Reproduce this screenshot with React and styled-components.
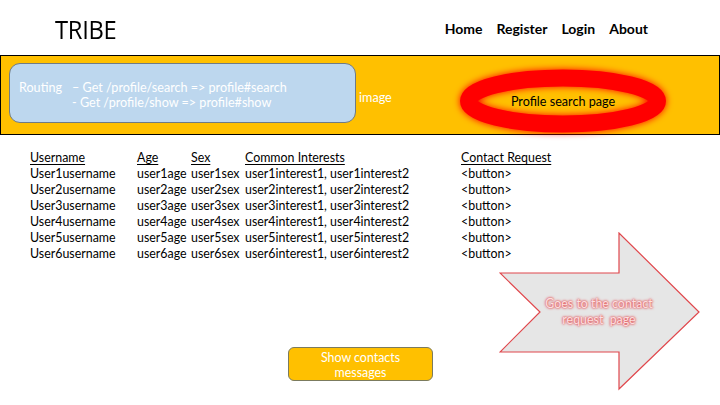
import styled, { createGlobalStyle } from "styled-components";

const GlobalStyle = createGlobalStyle`
  html, body {
    margin: 0;
    padding: 0;
    background: #ffffff;
  }
  body {
    font-family: Lato, "Open Sans", "Liberation Sans", sans-serif;
    color: #000;
  }
`;

const users = [1, 2, 3, 4, 5, 6];

const App = () => {
  return (
    <>
      <GlobalStyle />
      <Slide>
        <Header>
          <Logo>TRIBE</Logo>
          <Nav>
            <NavLink>Home</NavLink>
            <NavLink>Register</NavLink>
            <NavLink>Login</NavLink>
            <NavLink>About</NavLink>
          </Nav>
        </Header>

        <Banner>
          <RoutingBox>
            <RouteLabel>Routing</RouteLabel>
            <RouteLines>
              <span>– Get /profile/search =&gt; profile#search</span>
              <span>- Get /profile/show =&gt; profile#show</span>
            </RouteLines>
          </RoutingBox>
          <ImageLabel>image</ImageLabel>
          <Highlight>
            <svg width="224" height="80" viewBox="0 0 224 80">
              <defs>
                <filter id="glow" x="-20%" y="-50%" width="140%" height="200%">
                  <feGaussianBlur stdDeviation="3.5" result="b" />
                  <feMerge>
                    <feMergeNode in="b" />
                    <feMergeNode in="SourceGraphic" />
                  </feMerge>
                </filter>
              </defs>
              <ellipse
                cx="112"
                cy="40"
                rx="94.5"
                ry="23"
                fill="none"
                stroke="#ff0000"
                strokeWidth="17"
                filter="url(#glow)"
              />
            </svg>
            <HighlightText>Profile search page</HighlightText>
          </Highlight>
        </Banner>

        <Table>
          <Th>Username</Th>
          <Th>Age</Th>
          <Th>Sex</Th>
          <Th>Common Interests</Th>
          <Th>Contact Request</Th>
          {users.map((n) => (
            <Row key={n}>
              <Td>User{n}username</Td>
              <Td>user{n}age</Td>
              <Td>user{n}sex</Td>
              <Td>
                user{n}interest1, user{n}interest2
              </Td>
              <Td>&lt;button&gt;</Td>
            </Row>
          ))}
        </Table>

        <Bottom>
          <ShowButton>
            Show contacts
            <br />
            messages
          </ShowButton>
          <Arrow>
            <svg width="202" height="160" viewBox="0 0 202 160">
              <polygon
                points="1,41 120,41 120,1 200,80 120,157 120,120 1,120 41,80"
                fill="#e6e6e6"
                stroke="#e0474c"
                strokeWidth="1.2"
              />
            </svg>
            <ArrowText>
              Goes to the contact
              <br />
              request&nbsp; page
            </ArrowText>
          </Arrow>
        </Bottom>
      </Slide>
    </>
  );
};

export default App;

const Slide = styled.div`
  width: 720px;
  height: 405px;
  position: relative;
  overflow: hidden;
  background: #ffffff;
`;

const Header = styled.div`
  height: 55px;
  display: flex;
  align-items: center;
  justify-content: space-between;
  padding: 0 72px 0 55px;
  box-sizing: border-box;
`;

const Logo = styled.div`
  font-size: 25px;
  font-family: "Open Sans", Lato, sans-serif;
  font-weight: 400;
  letter-spacing: -0.3px;
  transform: scaleX(0.95);
  transform-origin: left center;
  margin-top: 2px;
`;

const Nav = styled.div`
  display: flex;
  gap: 14px;
  margin-top: 2px;
`;

const NavLink = styled.span`
  font-size: 14px;
  font-weight: 700;
`;

const Banner = styled.div`
  height: 80px;
  box-sizing: border-box;
  border: 1px solid #000;
  background: #ffc000;
  display: flex;
  align-items: flex-start;
  padding: 7px 0 0 8px;
  position: relative;
`;

const RoutingBox = styled.div`
  width: 347px;
  height: 60px;
  box-sizing: border-box;
  background: #bdd7ee;
  border: 1px solid #6f7b85;
  border-radius: 11px;
  display: flex;
  align-items: center;
  padding: 3px 0 0 9px;
  color: #ffffff;
  font-size: 12.6px;
  line-height: 15px;
`;

const RouteLabel = styled.span`
  margin-top: -15px;
  width: 53px;
`;

const RouteLines = styled.div`
  display: flex;
  flex-direction: column;
`;

const ImageLabel = styled.span`
  color: #ffffff;
  font-size: 12.6px;
  margin-left: 3px;
  margin-top: 27px;
`;

const Highlight = styled.div`
  position: absolute;
  left: 450px;
  top: 5px;
  width: 224px;
  height: 80px;
  display: flex;
  align-items: center;
  justify-content: center;
  svg {
    position: absolute;
    left: 0;
    top: 0;
    overflow: visible;
  }
`;

const HighlightText = styled.span`
  position: relative;
  font-size: 12.6px;
  color: #000;
`;

const Table = styled.div`
  display: grid;
  grid-template-columns: 107px 54px 54px 216px auto;
  padding: 15px 0 0 30px;
  font-size: 12.4px;
  line-height: 16px;
`;

const Th = styled.div`
  text-decoration: underline;
  text-underline-offset: 2px;
`;

const Row = styled.div`
  display: contents;
`;

const Td = styled.div`
  white-space: nowrap;
`;

const Bottom = styled.div`
  position: relative;
  height: 150px;
  display: flex;
  justify-content: flex-start;
  padding-left: 288px;
  box-sizing: border-box;
`;

const ShowButton = styled.div`
  margin-top: 85px;
  width: 145px;
  height: 34px;
  box-sizing: border-box;
  background: #ffc000;
  border: 1px solid #7b7b5e;
  border-radius: 6px;
  color: #ffffff;
  font-size: 12.4px;
  line-height: 15px;
  text-align: center;
  padding-top: 2px;
`;

const Arrow = styled.div`
  position: absolute;
  left: 499px;
  top: -30px;
  width: 202px;
  height: 160px;
  display: flex;
  align-items: center;
  justify-content: center;
  svg {
    position: absolute;
    left: 0;
    top: 0;
  }
`;

const ArrowText = styled.span`
  position: relative;
  margin-left: -2px;
  color: #fbe0e1;
  font-size: 12.4px;
  line-height: 16px;
  text-align: center;
  text-shadow: 0 0 2px #e23b42, 0 0 3px #e23b42;
`;
